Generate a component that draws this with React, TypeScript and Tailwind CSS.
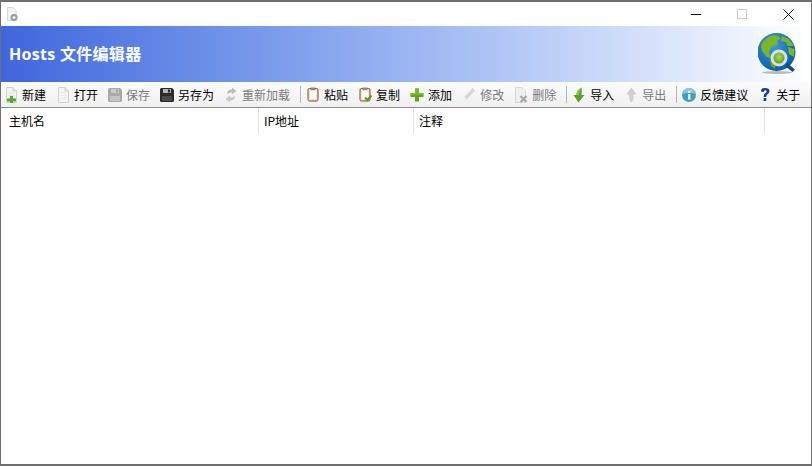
import React from 'react';

const PageBase = ({ children }: { children?: React.ReactNode }) => (
  <svg width="14" height="16" viewBox="0 0 14 16" className="shrink-0">
    <path d="M2.5 .5H9L12.5 4V15.5H2.5Z" fill="#f4f4f4" stroke="#d2d2d2" />
    <path d="M9 .5V4H12.5" fill="#e6e6e6" stroke="#d2d2d2" />
    <path d="M4.5 6H10.5M4.5 8.5H10.5M4.5 11H10.5" stroke="#e6e6e6" />
    {children}
  </svg>
);

const NewIcon = () => (
  <PageBase>
    <path d="M6 9H9V11.5H12V14.5H9V16H6V14.5H3V11.5H6Z" fill="#5aa62a" />
  </PageBase>
);

const Disk = ({ color, label, slot }: { color: string; label: string; slot: string }) => (
  <svg width="14" height="14" viewBox="0 0 14 14" className="shrink-0">
    <path d="M0 1.5Q0 0 1.5 0H12L14 2V12.5Q14 14 12.5 14H1.5Q0 14 0 12.5Z" fill={color} />
    <rect x="3" y="1" width="8" height="4" fill={label} />
    <rect x="8" y="1.5" width="2" height="3" fill={color} />
    <rect x="2" y="8" width="10" height="5" fill={slot} />
  </svg>
);

const ReloadIcon = () => (
  <svg width="14" height="16" viewBox="0 0 14 16" className="shrink-0">
    <path d="M3 7Q3 2.5 8 2.5V.5L12.5 4L8 7.5V5.5Q5.5 5.5 3 7Z" fill="#bcbcbc" />
    <path d="M11 9Q11 13.5 6 13.5V15.5L1.5 12L6 8.5V10.5Q8.5 10.5 11 9Z" fill="#c8c8c8" />
  </svg>
);

const Clipboard = ({ check }: { check?: boolean }) => (
  <svg width="13" height="15" viewBox="0 0 13 15" className="shrink-0">
    <rect x="1" y="1.5" width="10" height="12.5" rx="1.5" fill="#f7e3c8" stroke="#7a4a26" />
    <rect x="3" y="4" width="6" height="8" fill="#ffffff" />
    <rect x="3.5" y="0.5" width="5" height="2.5" fill="#8a8a8a" />
    {check && <path d="M6 10.5L8.5 13L12.5 8.5" fill="none" stroke="#4f9a27" strokeWidth="2" />}
  </svg>
);

const PlusIcon = () => (
  <svg width="14" height="14" viewBox="0 0 14 14" className="shrink-0">
    <path d="M5 .5H9V5H13.5V9H9V13.5H5V9H.5V5H5Z" fill="#5fa51f" />
    <path d="M5 .5H9V5H13.5V7H.5V5H5Z" fill="#74bd2e" />
  </svg>
);

const PencilIcon = () => (
  <svg width="14" height="15" viewBox="0 0 14 15" className="shrink-0">
    <path d="M10.5 1L13 3.5L5 12.5L1.5 14L2.5 10Z" fill="#d6d6d6" />
    <path d="M2.5 10L5 12.5L1.5 14Z" fill="#efefef" />
  </svg>
);

const DeleteIcon = () => (
  <svg width="14" height="16" viewBox="0 0 14 16" className="shrink-0">
    <path d="M1.5 .5H8L11.5 4V15.5H1.5Z" fill="#efefef" stroke="#d8d8d8" />
    <path d="M6.5 9L12.5 15M12.5 9L6.5 15" stroke="#a9a9a9" strokeWidth="2.2" />
  </svg>
);

const ImportIcon = () => (
  <svg width="12" height="16" viewBox="0 0 12 16" className="shrink-0">
    <path d="M8.5 .5Q9 3 8.5 8H11.5L5.5 15.5L.5 8H3.5Q3.5 3 8.5 .5Z" fill="#59a12c" />
    <path d="M8.5 .5Q6 4 6 8H3.5Q3.5 3 8.5 .5Z" fill="#86c94d" />
  </svg>
);

const ExportIcon = () => (
  <svg width="12" height="16" viewBox="0 0 12 16" className="shrink-0">
    <path d="M6.5 .5L11.5 7.5H8.5V12Q8.5 14 6 15.5Q4 13 4 7.5H1Z" fill="#cfcfcf" />
  </svg>
);

const InfoIcon = () => (
  <svg width="14" height="14" viewBox="0 0 14 14" className="shrink-0">
    <circle cx="7" cy="7" r="7" fill="#3f9fc0" />
    <path d="M1 6A6 6 0 0 1 13 6Q7 3.5 1 6Z" fill="#86cde0" />
    <rect x="6" y="6" width="2.4" height="5.5" fill="#fff" />
    <rect x="6" y="2.8" width="2.4" height="2.2" fill="#fff" />
  </svg>
);

const HelpIcon = () => (
  <svg width="14" height="15" viewBox="0 0 14 15" className="shrink-0">
    <path d="M3 4.5Q3 1 7 1Q11.5 1 11.5 4.3Q11.5 6.3 9.3 7.4Q8.2 8 8.2 10H5.6Q5.6 7.2 7.4 6.1Q8.6 5.4 8.6 4.4Q8.6 3.3 7.2 3.3Q5.8 3.3 5.7 4.9Z" fill="#12418f" />
    <rect x="5.6" y="11" width="2.7" height="3" fill="#12418f" />
  </svg>
);

const GlobeLogo = () => (
  <svg width="40" height="42" viewBox="0 0 40 42">
    <defs>
      <radialGradient id="sea" cx="40%" cy="30%" r="70%">
        <stop offset="0%" stopColor="#3f9adb" />
        <stop offset="100%" stopColor="#0a5ea8" />
      </radialGradient>
      <radialGradient id="lens" cx="50%" cy="40%" r="60%">
        <stop offset="0%" stopColor="#a5dc5c" />
        <stop offset="100%" stopColor="#5c9f22" />
      </radialGradient>
    </defs>
    <ellipse cx="19" cy="39.5" rx="15" ry="1.5" fill="#b9b9b9" />
    <circle cx="18.5" cy="19" r="19" fill="url(#sea)" />
    <path d="M9 5Q14 1 20 3L23 5L19 8L20 12L14 13L11 19L13 25L9 24L4 18L3 12Q5 8 9 5Z" fill="#7ab52a" />
    <path d="M24 3L31 6L36 13L30 13L28 9L23 8Z" fill="#7ab52a" />
    <path d="M30 14L36.5 16L36 24L31 21Z" fill="#7ab52a" />
    <path d="M12 27L18 29L17 36L13 33Z" fill="#6aa625" />
    <path d="M29 30L37 36.5L34.5 39L27 33Z" fill="#12488f" />
    <circle cx="21" cy="25" r="8.5" fill="#dcdedb" />
    <circle cx="21" cy="25" r="5.5" fill="url(#lens)" />
  </svg>
);

const SmallAppIcon = () => (
  <svg width="13" height="15" viewBox="0 0 13 15" className="shrink-0">
    <path d="M1.5 .5H7L10 3.5V13.5H1.5Z" fill="#f2f2f2" stroke="#d6d6d6" />
    <circle cx="8" cy="10.5" r="3.5" fill="#9a9a9a" />
    <circle cx="8" cy="10.5" r="1.5" fill="#f4f4f4" />
  </svg>
);

type Tool = { label: string; icon: React.ReactNode; off?: boolean; sep?: boolean };

const tools: Tool[] = [
  { label: '新建', icon: <NewIcon /> },
  { label: '打开', icon: <PageBase /> },
  { label: '保存', icon: <Disk color="#a9a9a9" label="#c9c9c9" slot="#c4c4c4" />, off: true },
  { label: '另存为', icon: <Disk color="#2b2b2b" label="#b5b5b5" slot="#4a4a4a" /> },
  { label: '重新加载', icon: <ReloadIcon />, off: true, sep: true },
  { label: '粘贴', icon: <Clipboard /> },
  { label: '复制', icon: <Clipboard check /> },
  { label: '添加', icon: <PlusIcon /> },
  { label: '修改', icon: <PencilIcon />, off: true },
  { label: '删除', icon: <DeleteIcon />, off: true, sep: true },
  { label: '导入', icon: <ImportIcon /> },
  { label: '导出', icon: <ExportIcon />, off: true, sep: true },
  { label: '反馈建议', icon: <InfoIcon /> },
  { label: '关于', icon: <HelpIcon /> },
];

export default function App() {
  return (
    <div className="w-[812px] h-[466px] flex flex-col bg-white border-x border-t-2 border-b-2 border-[#6e6e6e] overflow-hidden font-['Noto_Sans_CJK_SC','Liberation_Sans',sans-serif] text-[12px] text-black">
      {/* title bar */}
      <div className="h-[24px] flex items-center pl-[5px] shrink-0">
        <SmallAppIcon />
        <div className="ml-auto flex items-center">
          <div className="w-[46px] flex justify-center">
            <div className="w-[10px] h-px bg-black" />
          </div>
          <div className="w-[46px] flex justify-center">
            <div className="w-[10px] h-[10px] border border-[#cccccc]" />
          </div>
          <div className="w-[46px] flex justify-center">
            <svg width="11" height="11" viewBox="0 0 11 11">
              <path d="M.5 .5L10.5 10.5M10.5 .5L.5 10.5" stroke="#111" strokeWidth="1" />
            </svg>
          </div>
        </div>
      </div>

      {/* banner */}
      <div className="h-[56px] shrink-0 flex items-center justify-between pl-[8px] pr-[13px] bg-gradient-to-r from-[#3f66dc] to-[#ffffff]">
        <span className="text-[16px] leading-[20px] font-bold text-white whitespace-nowrap tracking-[0.3px] font-['Open_Sans','Noto_Sans_CJK_SC',sans-serif]">
          Hosts 文件编辑器
        </span>
        <GlobeLogo />
      </div>

      {/* toolbar */}
      <div className="h-[25px] shrink-0 flex items-center pl-[3px] bg-gradient-to-b from-[#fbfbfb] to-[#f0f0f0] border-b border-[#8a8a8a] box-content">
        {tools.map((t) => (
          <React.Fragment key={t.label}>
            <div className={`flex items-center gap-[4px] mr-[10px] shrink-0 whitespace-nowrap ${t.off ? 'text-[#7b7b7b]' : ''}`}>
              <div className="w-[14px] flex justify-center">{t.icon}</div>
              <span className="leading-[16px]">{t.label}</span>
            </div>
            {t.sep && <div className="w-px h-[17px] shrink-0 bg-[#b5b5b5] mr-[5px]" />}
          </React.Fragment>
        ))}
      </div>

      {/* table header */}
      <div className="h-[26px] shrink-0 flex items-center">
        <div className="w-[258px] h-full pl-[8px] flex items-center border-r border-[#e4e4e4]">主机名</div>
        <div className="w-[155px] h-full pl-[5px] flex items-center border-r border-[#e4e4e4]">IP地址</div>
        <div className="w-[351px] h-full pl-[5px] flex items-center border-r border-[#e4e4e4]">注释</div>
      </div>

      <div className="flex-1 bg-white" />
    </div>
  );
}
